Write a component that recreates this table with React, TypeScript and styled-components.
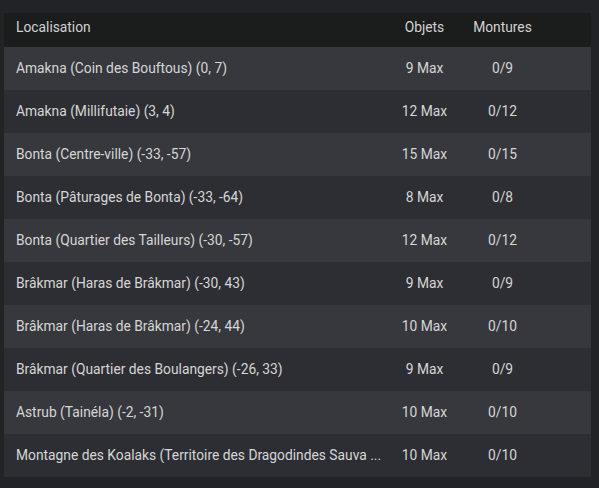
import styled, { createGlobalStyle } from 'styled-components';

const GlobalStyle = createGlobalStyle`
  html, body {
    margin: 0;
    padding: 0;
    background: #222327;
  }
  body {
    font-family: Roboto, 'Liberation Sans', sans-serif;
  }
`;

const Page = styled.div`
  width: 599px;
  height: 488px;
  padding: 13px 8px 0 4px;
  box-sizing: border-box;
  background: #222327;
`;

const Table = styled.div`
  width: 587px;
  display: flex;
  flex-direction: column;
`;

const Row = styled.div<{ variant: 'head' | 'odd' | 'even' }>`
  display: grid;
  grid-template-columns: 387px 67px 89px 1fr;
  align-items: center;
  height: ${props => (props.variant === 'head' ? '34px' : '43px')};
  padding-bottom: ${props => (props.variant === 'head' ? '6px' : '2px')};
  box-sizing: border-box;
  background: ${props => (props.variant === 'head' ? '#1b1c1c' : props.variant === 'odd' ? '#37383d' : '#2d2e33')};
  color: ${props => (props.variant === 'head' ? '#d2d2d2' : '#d6d6d6')};
  font-size: 13.8px;
  line-height: 16px;
`;

const Cell = styled.div<{ align?: 'left' | 'center' }>`
  text-align: ${props => props.align || 'center'};
  padding: ${props => (props.align === 'left' ? '0 8px 0 12px' : '0')};
  white-space: nowrap;
  overflow: hidden;
  text-overflow: ellipsis;
`;

interface Enclos {
  place: string;
  objets: number;
  montures: number;
}

const rows: Enclos[] = [
  { place: 'Amakna (Coin des Bouftous) (0, 7)', objets: 9, montures: 9 },
  { place: 'Amakna (Millifutaie) (3, 4)', objets: 12, montures: 12 },
  { place: 'Bonta (Centre-ville) (-33, -57)', objets: 15, montures: 15 },
  { place: 'Bonta (Pâturages de Bonta) (-33, -64)', objets: 8, montures: 8 },
  { place: 'Bonta (Quartier des Tailleurs) (-30, -57)', objets: 12, montures: 12 },
  { place: 'Brâkmar (Haras de Brâkmar) (-30, 43)', objets: 9, montures: 9 },
  { place: 'Brâkmar (Haras de Brâkmar) (-24, 44)', objets: 10, montures: 10 },
  { place: 'Brâkmar (Quartier des Boulangers) (-26, 33)', objets: 9, montures: 9 },
  { place: 'Astrub (Tainéla) (-2, -31)', objets: 10, montures: 10 },
  { place: 'Montagne des Koalaks (Territoire des Dragodindes Sauva ...', objets: 10, montures: 10 },
];

function App() {
  return (
    <Page>
      <GlobalStyle />
      <Table>
        <Row variant="head">
          <Cell align="left">Localisation</Cell>
          <Cell>Objets</Cell>
          <Cell>Montures</Cell>
          <Cell />
        </Row>
        {rows.map((r, i) => (
          <Row key={i} variant={i % 2 === 0 ? 'odd' : 'even'}>
            <Cell align="left">{r.place}</Cell>
            <Cell>{r.objets} Max</Cell>
            <Cell>0/{r.montures}</Cell>
            <Cell />
          </Row>
        ))}
      </Table>
    </Page>
  );
}

export default App;
